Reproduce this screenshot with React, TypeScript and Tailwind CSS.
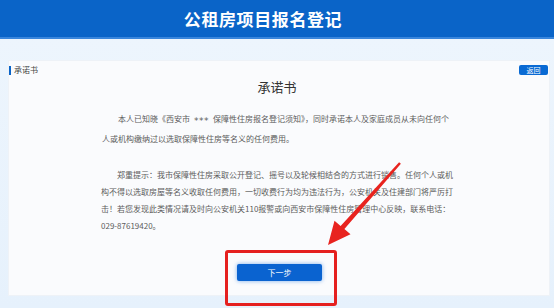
import React from "react";

const cjk = { fontFamily: '"Noto Sans CJK SC", "Noto Sans", sans-serif' };

export default function App() {
  return (
    <div
      className="relative w-full h-[308px] overflow-hidden bg-[#e8f2fc] flex flex-col"
      style={cjk}
    >
      {/* Header */}
      <div className="h-[39px] shrink-0 bg-[#0a64c8] border-b-2 border-[#3a86dc] flex items-center justify-center pr-[28px]">
        <span className="text-white text-[17px] font-bold tracking-[0.6px] leading-none">
          公租房项目报名登记
        </span>
      </div>

      {/* Body */}
      <div className="flex-1 bg-gradient-to-b from-[#edf5fd] to-[#e6f1fc] pt-[21px] pl-[8px] pr-[4px]">
        <div className="h-[236px] bg-[#fafbfd] border border-[#eef2f7] flex flex-col">
          {/* Card head row */}
          <div className="mt-[4px] h-[10px] flex items-center justify-between">
            <div className="flex items-center h-full">
              <div className="w-[2px] h-[9px] bg-[#0a64c8]" />
              <span className="ml-[3px] text-[8px] leading-none text-[#444]">承诺书</span>
            </div>
            <div className="mr-[1px] w-[29px] h-[10px] rounded-[2px] bg-[#0a6ad3] flex items-center justify-center">
              <span className="text-white text-[7px] leading-none">返回</span>
            </div>
          </div>

          {/* Title */}
          <div className="mt-[3px] h-[16px] flex items-center justify-center pr-[4px]">
            <span className="text-[13px] leading-none text-[#333]">承诺书</span>
          </div>

          {/* Paragraph 1 */}
          <p className="mt-[15px] ml-[93px] w-[380px] whitespace-nowrap text-[8px] leading-[19px] text-[#5c5c5c]">
            <span className="inline-block w-[16px]" />
            本人已知晓《西安市
            <span
              className="relative top-[2px] mx-[4px] text-[9px] tracking-[0.5px]"
              style={{ fontFamily: '"DejaVu Sans", sans-serif' }}
            >
              ***
            </span>
            保障性住房报名登记须知》，同时承诺本人及家庭成员从未向任何个
            <br />
            人或机构缴纳过以选取保障性住房等名义的任何费用。
          </p>

          {/* Paragraph 2 */}
          <p className="mt-[18px] ml-[92px] w-[380px] whitespace-nowrap text-[8px] leading-[17px] text-[#5c5c5c]">
            <span className="inline-block w-[16px]" />
            郑重提示：我市保障性住房采取公开登记、摇号以及轮候相结合的方式进行销售。任何个人或机
            <br />
            构不得以选取房屋等名义收取任何费用，一切收费行为均为违法行为，公安机关及住建部门将严厉打
            <br />
            击！若您发现此类情况请及时向公安机关110报警或向西安市保障性住房管理中心反映，联系电话：
            <br />
            029-87619420。
          </p>

          {/* Next button */}
          <div className="mt-[30px] flex justify-center pl-[1px]">
            <div className="w-[85px] h-[17px] rounded-[2px] bg-[#0a63d0] shadow-[0_0_4px_rgba(20,110,220,0.55)] flex items-center justify-center">
              <span className="text-white text-[8px] leading-none">下一步</span>
            </div>
          </div>
        </div>
      </div>

      {/* Annotation: red box */}
      <div className="absolute left-[225px] top-[250px] w-[112px] h-[56px] border-[3px] border-[#e5201f] rounded-[3px]" />

      {/* Annotation: red arrow */}
      <svg
        className="absolute left-0 top-0 pointer-events-none"
        width="554"
        height="308"
        viewBox="0 0 554 308"
      >
        <polygon
          fill="#e8231f"
          points="400.9,163.7 344.4,229.1 350.5,234.2 328,245 334.5,220.8 340.6,225.9 399.1,162.3"
        />
      </svg>
    </div>
  );
}
